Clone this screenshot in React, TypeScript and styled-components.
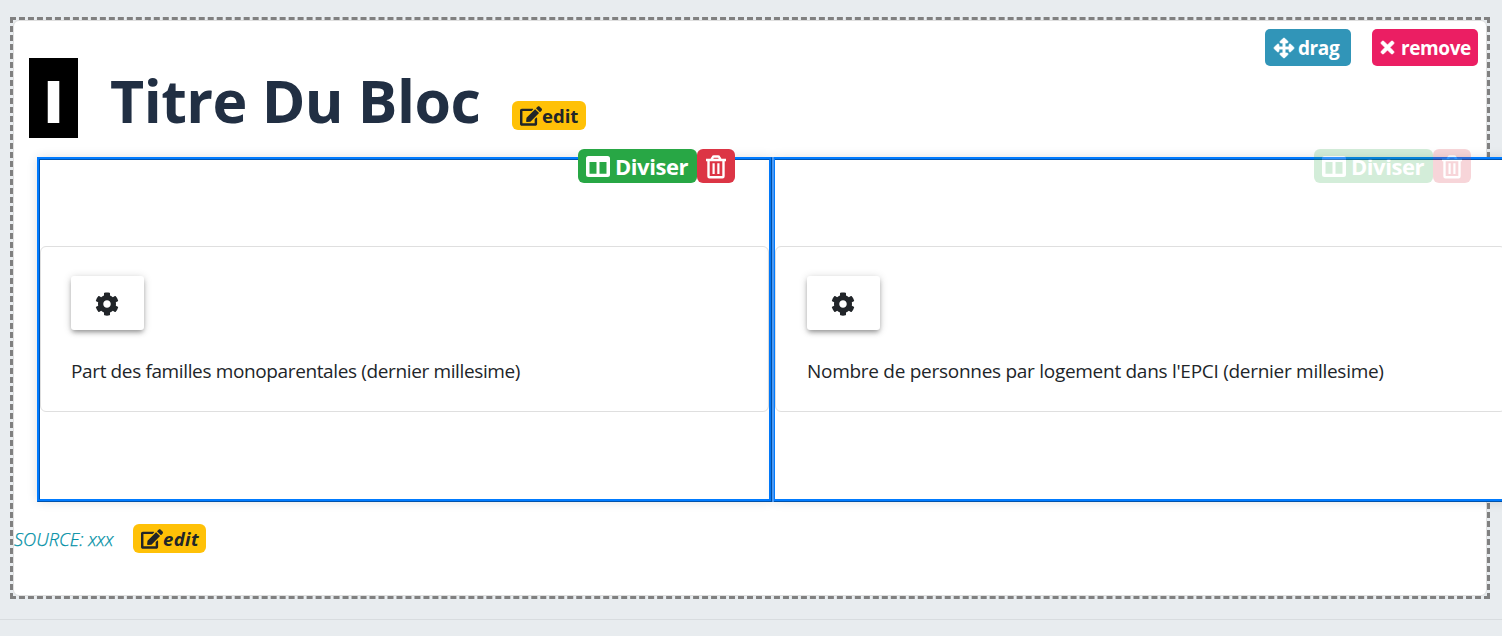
import React from "react";
import styled, { createGlobalStyle, css } from "styled-components";
import { FaArrowsAlt, FaCog, FaEdit, FaTimes } from "react-icons/fa";

const Global = createGlobalStyle`
  * { box-sizing: border-box; }
  body {
    margin: 0;
    background: #e8ecef;
    color: #212529;
    font-family: "Open Sans", "Noto Sans", sans-serif;
    overflow: hidden;
  }
`;

const Page = styled.main`
  height: 636px;
  padding: 17px 12px 0 10px;
  overflow: hidden;
`;

const Dashed = styled.section`
  width: 1480px;
  height: 582px;
  border: 3px dashed #808080;
`;

const Card = styled.div`
  height: 100%;
  display: flex;
  flex-direction: column;
  background: #fff;
  border: 1px solid #dfdfdf;
  border-radius: 6px;
`;

const Header = styled.header`
  height: 136px;
  display: flex;
  align-items: flex-start;
  padding: 8px 8px 0 15px;
`;

const Badge = styled.div`
  width: 49px;
  height: 80px;
  margin-top: 29px;
  background: #000;
  color: #fff;
  text-align: center;
  font-size: 59px;
  font-weight: 800;
  line-height: 85px;
`;

const Title = styled.h1`
  margin: 29px 0 0 32px;
  width: 402px;
  color: #212f43;
  font-size: 59px;
  font-weight: 700;
  line-height: 85px;
  letter-spacing: -0.52px;
  white-space: nowrap;
`;

const EditButton = styled.button<{ $slanted?: boolean }>`
  height: 29px;
  width: ${(p) => (p.$slanted ? 73 : 74)}px;
  padding: 0 0 0 8px;
  display: flex;
  align-items: center;
  border: 0;
  border-radius: 6px;
  background: #ffc107;
  color: #212529;
  font-family: inherit;
  font-size: 18.5px;
  font-weight: 700;
  line-height: 28px;
  font-style: ${(p) => (p.$slanted ? "italic" : "normal")};
  letter-spacing: ${(p) => (p.$slanted ? 0.4 : 0)}px;
  -webkit-text-stroke: 0;
  white-space: nowrap;

  svg {
    flex: none;
  }
`;

const TitleEdit = styled(EditButton)`
  margin-top: 72px;
`;

const Tools = styled.div`
  margin-left: auto;
  display: flex;
  gap: 21px;
`;

const ToolButton = styled.button<{ $bg: string; $width: number; $start: number }>`
  width: ${(p) => p.$width}px;
  height: 37px;
  padding: 0 0 0 ${(p) => p.$start}px;
  display: flex;
  align-items: center;
  gap: 4px;
  border: 0;
  border-radius: 5px;
  background: ${(p) => p.$bg};
  color: #fff;
  font-family: inherit;
  font-size: 19px;
  font-weight: 700;
  letter-spacing: -0.4px;

  svg {
    flex: none;
    overflow: visible;
    stroke: currentColor;
    stroke-width: 20px;
  }
`;

const Columns = styled.div`
  display: flex;
  gap: 2px;
  margin-left: 23px;
  width: 1471px;
`;

const Panel = styled.article`
  position: relative;
  flex: 0 0 735px;
  height: 345px;
  padding-top: 86px;
  border: 3px ridge #007bff;
  background: #fff;
  box-shadow: 0 0 10px rgba(0, 0, 0, 0.12);

  & + & {
    border-left: 1px solid #007bff;
    box-shadow: -2px 0 0 #4b99f3, 0 0 10px rgba(0, 0, 0, 0.12);
  }
`;

const PanelActions = styled.div<{ $faded?: boolean }>`
  position: absolute;
  top: -11px;
  right: ${(p) => (p.$faded ? 35 : 34)}px;
  display: flex;
  opacity: ${(p) => (p.$faded ? 0.2 : 1)};
`;

const actionButton = css`
  height: 34px;
  display: flex;
  align-items: center;
  padding: 0;
  border: 0;
  border-radius: 6px;
  color: #fff;
  font-family: inherit;
`;

const SplitButton = styled.button`
  ${actionButton}
  width: 119px;
  padding-left: 8px;
  gap: 5px;
  background: #28a745;
  font-size: 22px;
  font-weight: 700;
  letter-spacing: -0.45px;
`;

const DeleteButton = styled.button`
  ${actionButton}
  justify-content: center;
  width: 38px;
  padding-top: 1px;
  background: #dc3545;
`;

const Indicator = styled.div<{ $inset: number }>`
  height: 166px;
  padding: 29px 30px 0 ${(p) => p.$inset}px;
  border: 1px solid #dfdfdf;
  border-radius: 6px;
`;

const SettingsButton = styled.button`
  width: 73px;
  height: 54px;
  padding: 2px 1px 0 0;
  display: flex;
  align-items: center;
  justify-content: center;
  border: 0;
  border-radius: 3px;
  background: #fff;
  color: #212529;
  box-shadow: 0 3px 5px -1px rgba(0, 0, 0, 0.36), 0 1px 8px rgba(0, 0, 0, 0.16);
`;

const Label = styled.p<{ $tracking: number }>`
  margin: 27px 0 0;
  font-size: 19px;
  line-height: 28px;
  letter-spacing: ${(p) => p.$tracking}px;
  white-space: nowrap;
`;

const Source = styled.footer`
  display: flex;
  align-items: center;
  margin-top: 22px;
  height: 29px;
  color: #008fa5;
  font-size: 18.2px;
  font-weight: 300;
  font-style: italic;
`;

const SourceText = styled.span`
  width: 119px;
  white-space: nowrap;
  -webkit-text-stroke: 0.25px currentColor;
`;

const Rule = styled.hr`
  margin: 20px -12px 0 -10px;
  border: 0;
  border-top: 1px solid #d8dcdf;
`;

const ColumnsIcon = () => (
  <svg width="24" height="21" viewBox="0 0 24 21">
    <path
      fill="currentColor"
      fillRule="evenodd"
      d="M2.500 0h19A2.500 2.500 0 0 1 24 2.500v16a2.500 2.500 0 0 1-2.500 2.500h-19A2.500 2.500 0 0 1 0 18.500v-16A2.500 2.500 0 0 1 2.500 0Zm1 6v11.700h7V6Zm10 0v11.700h7V6Z"
    />
  </svg>
);

const TrashIcon = () => (
  <svg width="20" height="24" viewBox="0 0 20 24" fill="none" stroke="currentColor" strokeLinejoin="round">
    <path strokeWidth="2.4" d="M0 5h20M5.200 5l1.500-2.700q.4-.8 1.200-.8h4.200q.8 0 1.200.8L14.800 5M2.500 5v16.300q0 1 1 1h13q1 0 1-1V5" />
    <path strokeWidth="2.200" d="M7.600 8.300v10.700M12.400 8.300v10.700" />
  </svg>
);

type PanelData = { label: string; tracking: number; inset: number; faded?: boolean };

const panels: PanelData[] = [
  {
    label: "Part des familles monoparentales (dernier millesime)",
    tracking: -0.37,
    inset: 30,
  },
  {
    label: "Nombre de personnes par logement dans l'EPCI (dernier millesime)",
    tracking: -0.28,
    inset: 31,
    faded: true,
  },
];

export default function App() {
  return (
    <>
      <Global />
      <Page>
        <Dashed>
          <Card>
            <Header>
              <Badge>I</Badge>
              <Title>Titre Du Bloc</Title>
              <TitleEdit>
                <FaEdit size={22} />
                edit
              </TitleEdit>
              <Tools>
                <ToolButton $bg="#3195b8" $width={86} $start={9}>
                  <FaArrowsAlt size={20} />
                  drag
                </ToolButton>
                <ToolButton $bg="#eb1e63" $width={106} $start={6}>
                  <FaTimes size={19} />
                  remove
                </ToolButton>
              </Tools>
            </Header>
            <Columns>
              {panels.map((panel) => (
                <Panel key={panel.label}>
                  <PanelActions $faded={panel.faded}>
                    <SplitButton>
                      <ColumnsIcon />
                      Diviser
                    </SplitButton>
                    <DeleteButton>
                      <TrashIcon />
                    </DeleteButton>
                  </PanelActions>
                  <Indicator $inset={panel.inset}>
                    <SettingsButton>
                      <FaCog size={24} />
                    </SettingsButton>
                    <Label $tracking={panel.tracking}>{panel.label}</Label>
                  </Indicator>
                </Panel>
              ))}
            </Columns>
            <Source>
              <SourceText>SOURCE: xxx</SourceText>
              <EditButton $slanted>
                <FaEdit size={22} />
                edit
              </EditButton>
            </Source>
          </Card>
        </Dashed>
        <Rule />
      </Page>
    </>
  );
}
